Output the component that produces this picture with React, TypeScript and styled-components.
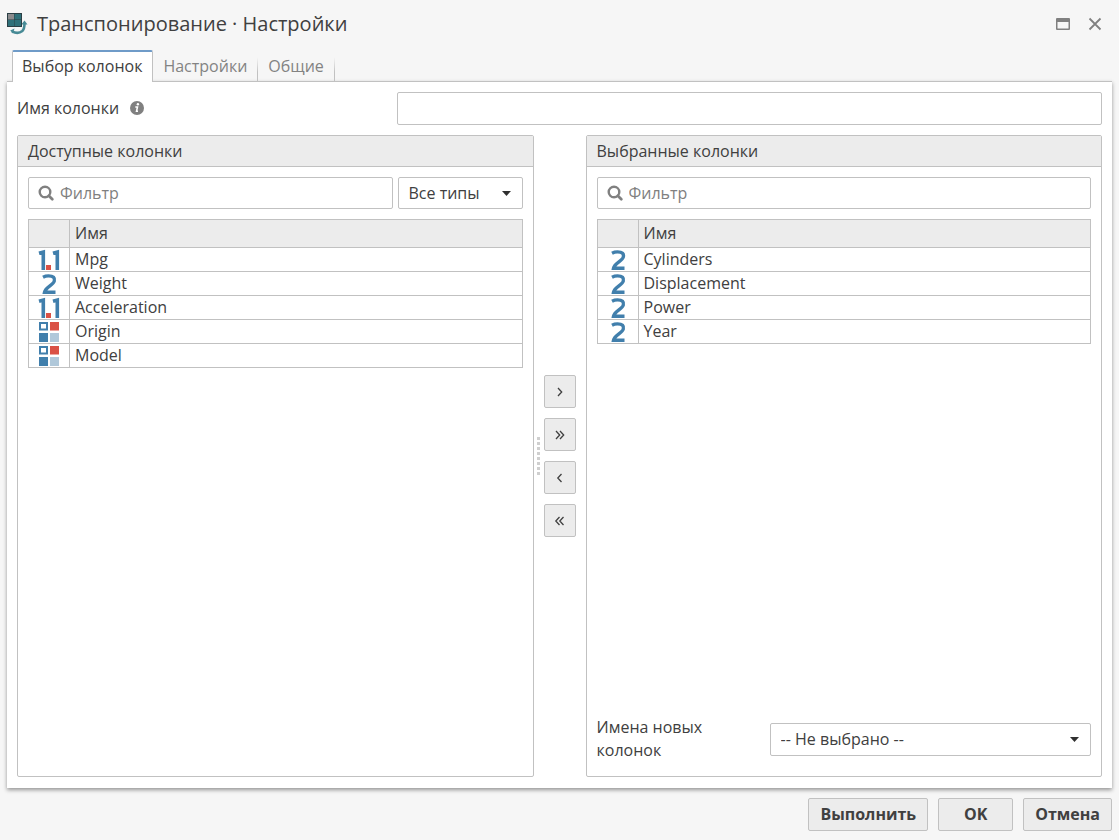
import React, { useId } from 'react';
import styled, { createGlobalStyle } from 'styled-components';

const line = '#c1c1c1';
const panelGray = '#ececec';
const textColor = '#404040';
const blue = '#417fac';
const red = '#da5145';

const GlobalStyle = createGlobalStyle`
  *, *::before, *::after { box-sizing: border-box; }
  body {
    margin: 0;
    background: #f6f6f6;
    color: ${textColor};
    font: 16px/22px "Open Sans", "Noto Sans", sans-serif;
  }
  button, input, select { font: inherit; color: inherit; }
`;

const Dialog = styled.div`
  display: flex;
  flex-direction: column;
  min-height: 100vh;
  padding: 0 7px;
`;

const TitleBar = styled.header`
  display: flex;
  align-items: center;
  height: 50px;
  padding: 0 10px 2px 0;
`;

const Title = styled.h1`
  flex: 1;
  margin: 0 0 0 9px;
  font-size: 20px;
  line-height: 28px;
  font-weight: 400;
`;

const WindowButton = styled.button`
  display: flex;
  margin-left: 17px;
  padding: 0;
  border: 0;
  background: none;
  color: #808080;
`;

const TabList = styled.div`
  display: flex;
  align-items: flex-end;
  padding-left: 5px;
`;

const Tab = styled.button<{ $active?: boolean }>`
  height: ${p => (p.$active ? 32 : 31)}px;
  margin-bottom: ${p => (p.$active ? -1 : 0)}px;
  padding: ${p => (p.$active ? '0 10px 2px 9px' : '1px 10px 0')};
  border: 0 solid ${line};
  border-width: ${p => (p.$active ? '2px 1px 0' : '0 1px 0 0')};
  border-top-color: #6f9bc8;
  border-radius: ${p => (p.$active ? '2px 2px 0 0' : '0')};
  border-image: ${p => (p.$active ? 'none' : `linear-gradient(transparent 25%, ${line} 70%) 1`)};
  background: ${p => (p.$active ? '#fff' : 'none')};
  color: ${p => (p.$active ? textColor : '#838383')};
  z-index: 1;
`;

const Content = styled.main`
  display: flex;
  flex: 1;
  flex-direction: column;
  gap: 10px;
  padding: 10px 10px 11px;
  border-top: 1px solid ${line};
  background: #fff;
  box-shadow: 0 2px 4px rgba(0, 0, 0, 0.4);
`;

const FieldRow = styled.div`
  display: flex;
  align-items: center;
`;

const FieldLabel = styled.label`
  display: flex;
  align-items: center;
  gap: 11px;
  width: 35%;
  padding-bottom: 2px;
`;

const WrappedLabel = styled.label`
  width: 35%;
  padding-right: 40px;
  line-height: 23px;
`;

const TextInput = styled.input`
  flex: 1;
  min-width: 0;
  height: 33px;
  padding: 0 10px;
  border: 1px solid ${line};
  border-radius: 2px;
  background: #fff;
`;

const Columns = styled.div`
  display: flex;
  flex: 1;
`;

const Panel = styled.section`
  display: flex;
  flex: 1 1 0;
  flex-direction: column;
  min-width: 0;
  border: 1px solid ${line};
  border-radius: 2px;
`;

const PanelTitle = styled.h2`
  margin: 0;
  padding: 4px 10px;
  border-bottom: 1px solid ${line};
  background: ${panelGray};
  font-size: 16px;
  line-height: 22px;
  font-weight: 400;
`;

const PanelBody = styled.div`
  display: flex;
  flex: 1;
  flex-direction: column;
  gap: 10px;
  padding: 10px 10px 14px;
`;

const FilterRow = styled.div`
  display: flex;
  gap: 5px;
`;

const FilterBox = styled.label`
  display: flex;
  flex: 1;
  align-items: center;
  gap: 6px;
  min-width: 0;
  height: 32px;
  padding: 0 9px;
  border: 1px solid ${line};
  border-radius: 2px;
  color: #808080;
`;

const FilterInput = styled.input`
  flex: 1;
  min-width: 0;
  padding: 0;
  border: 0;
  outline: 0;
  background: none;
  color: ${textColor};
  &::placeholder { color: #808080; opacity: 1; }
`;

const SelectBox = styled.div<{ $width?: number }>`
  position: relative;
  display: flex;
  flex: ${p => (p.$width ? `0 0 ${p.$width}px` : '1')};
`;

const Select = styled.select<{ $tall?: boolean }>`
  width: 100%;
  height: ${p => (p.$tall ? 33 : 32)}px;
  padding: 0 30px 0 10px;
  border: 1px solid ${line};
  border-radius: 2px;
  background: #fff;
  appearance: none;
`;

const Caret = styled.svg`
  position: absolute;
  top: 14px;
  right: 12px;
  pointer-events: none;
`;

const Table = styled.table`
  width: 100%;
  border-collapse: collapse;
  table-layout: fixed;
`;

const HeadCell = styled.th<{ $icon?: boolean }>`
  width: ${p => (p.$icon ? '41px' : 'auto')};
  height: 28px;
  padding: 0 5px 2px;
  border: 1px solid ${line};
  background: ${panelGray};
  font-weight: 400;
  text-align: left;
`;

const NameCell = styled.td`
  height: 24px;
  padding: 0 5px 1px;
  border: 1px solid ${line};
`;

const IconCell = styled.td`
  height: 24px;
  padding: 0;
  border: 1px solid ${line};
  line-height: 0;
  text-align: center;
`;

const Spacer = styled.div`
  flex: 1;
`;

const Transfer = styled.div`
  display: flex;
  align-items: center;
  padding-right: 10px;
`;

const Splitter = styled.div`
  display: flex;
  flex-direction: column;
  align-items: center;
  gap: 2px;
  width: 10px;
`;

const Dot = styled.span`
  width: 3px;
  height: 3px;
  background: #cfcfcf;
`;

const MoveButtons = styled.div`
  display: flex;
  flex-direction: column;
  gap: 10px;
`;

const Button = styled.button`
  height: 33px;
  padding: 0 11px 2px;
  border: 1px solid ${line};
  border-radius: 2px;
  background: ${panelGray};
`;

const MoveButton = styled(Button)`
  display: flex;
  align-items: center;
  justify-content: center;
  width: 32px;
  padding: 0;
`;

const FooterButton = styled(Button)`
  min-width: 75px;
  font-weight: 700;
`;

const Footer = styled.footer`
  display: flex;
  justify-content: flex-end;
  gap: 10px;
  padding: 10px 0 9px;
`;

type Kind = 'real' | 'integer' | 'category';

function TypeIcon({ kind }: { kind: Kind }) {
  return (
    <svg width="22" height="22" viewBox="0 0 22 22" aria-hidden="true">
      {kind === 'integer' && (
        <path
          d="M5 4.200Q7.500 2.900 10.500 2.900C15.500 2.900 17 5 16.300 8C15.500 12 7.500 14 6.500 19.200H17.500"
          fill="none"
          stroke={blue}
          strokeWidth="3.400"
        />
      )}
      {kind === 'real' && (
        <>
          <path d="M1 4.200L5.300 3V21M15 4.200L19.300 3V21" fill="none" stroke={blue} strokeWidth="3.600" />
          <rect x="8" y="16" width="5" height="5" fill={red} />
        </>
      )}
      {kind === 'category' && (
        <>
          <rect x="2" y="2" width="7" height="6.500" fill="#fff" stroke={blue} strokeWidth="2" />
          <rect x="12" y="1" width="9" height="8.500" fill={red} />
          <rect x="1" y="12" width="9" height="9" fill={blue} />
          <rect x="12" y="12" width="9" height="9" fill="#b0c8da" />
        </>
      )}
    </svg>
  );
}

function AppIcon() {
  return (
    <svg width="21" height="22" viewBox="0 0 21 22" aria-hidden="true">
      <path d="M5 18.300Q11 21.500 15.300 18Q17.500 16 17.500 10.500" fill="none" stroke="#478a95" strokeWidth="2.600" />
      <path d="M14.300 11.500L17.500 7.500L20.500 11.500ZM7.500 15.600L3.200 17.400L6 20.600Z" fill="#478a95" />
      <rect x="0" y="0" width="15" height="14" fill="#2b3f45" />
      <rect x="1" y="1" width="6" height="5.500" fill="#8b8b8d" />
      <rect x="7.500" y="1" width="6.500" height="5.500" fill="#2f7079" />
      <rect x="1" y="7" width="6" height="6" fill="#2f7079" />
      <rect x="7.500" y="7" width="6.500" height="6" fill="#2f7079" />
    </svg>
  );
}

function InfoIcon() {
  return (
    <svg width="14" height="14" viewBox="0 0 14 14" aria-hidden="true">
      <circle cx="7" cy="7" r="7" fill="#808080" />
      <circle cx="7.900" cy="3.200" r="1.200" fill="#fff" />
      <path d="M5.300 5.900H7.500L6.500 10.300H8" fill="none" stroke="#fff" strokeWidth="1.500" />
    </svg>
  );
}

function SearchIcon() {
  return (
    <svg width="16" height="16" viewBox="0 0 16 16" fill="none" stroke="#808080" aria-hidden="true">
      <circle cx="7" cy="7" r="5.300" strokeWidth="2.400" />
      <path d="M10.800 10.800L14.300 14.300" strokeWidth="2.700" strokeLinecap="round" />
    </svg>
  );
}

function Chevrons({ left, double }: { left?: boolean; double?: boolean }) {
  const arrow = left ? 'M7.500 2L3.800 6L7.500 10' : 'M4 2L7.700 6L4 10';
  return (
    <svg width="12" height="12" viewBox="0 0 12 12" fill="none" stroke="#404040" strokeWidth="1.300" aria-hidden="true">
      {double ? (
        <>
          <path d={arrow} transform="translate(-2 0)" />
          <path d={arrow} transform="translate(2 0)" />
        </>
      ) : (
        <path d={arrow} />
      )}
    </svg>
  );
}

function Filter() {
  return (
    <FilterBox>
      <SearchIcon />
      <FilterInput placeholder="Фильтр" aria-label="Фильтр" />
    </FilterBox>
  );
}

function DropDown({ id, label, value, width }: { id?: string; label?: string; value: string; width?: number }) {
  return (
    <SelectBox $width={width}>
      <Select id={id} aria-label={label} $tall={!width}>
        <option>{value}</option>
      </Select>
      <Caret width="9" height="5" viewBox="0 0 9 5" aria-hidden="true">
        <path d="M0 0H9L4.500 5Z" fill="#303030" />
      </Caret>
    </SelectBox>
  );
}

function ColumnTable({ rows }: { rows: [string, Kind][] }) {
  return (
    <Table>
      <thead>
        <tr>
          <HeadCell $icon />
          <HeadCell>Имя</HeadCell>
        </tr>
      </thead>
      <tbody>
        {rows.map(([name, kind]) => (
          <tr key={name}>
            <IconCell><TypeIcon kind={kind} /></IconCell>
            <NameCell>{name}</NameCell>
          </tr>
        ))}
      </tbody>
    </Table>
  );
}

const available: [string, Kind][] = [
  ['Mpg', 'real'],
  ['Weight', 'integer'],
  ['Acceleration', 'real'],
  ['Origin', 'category'],
  ['Model', 'category'],
];

const selected: [string, Kind][] = [
  ['Cylinders', 'integer'],
  ['Displacement', 'integer'],
  ['Power', 'integer'],
  ['Year', 'integer'],
];

export default function App() {
  const nameId = useId();
  const newNamesId = useId();
  return (
    <Dialog>
      <GlobalStyle />
      <TitleBar>
        <AppIcon />
        <Title>Транспонирование · Настройки</Title>
        <WindowButton aria-label="Развернуть">
          <svg width="16" height="14" viewBox="0 0 16 14" aria-hidden="true">
            <path d="M2 1H14Q15 1 15 2V12Q15 13 14 13H2Q1 13 1 12V2Q1 1 2 1ZM2.500 5V11.500H13.500V5Z" fill="currentColor" fillRule="evenodd" />
          </svg>
        </WindowButton>
        <WindowButton aria-label="Закрыть">
          <svg width="14" height="14" viewBox="0 0 14 14" fill="none" stroke="currentColor" strokeWidth="1.800" aria-hidden="true">
            <path d="M1.500 1.500L12.500 12.500M12.500 1.500L1.500 12.500" />
          </svg>
        </WindowButton>
      </TitleBar>

      <TabList role="tablist">
        <Tab role="tab" aria-selected="true" $active>Выбор колонок</Tab>
        <Tab role="tab" aria-selected="false">Настройки</Tab>
        <Tab role="tab" aria-selected="false">Общие</Tab>
      </TabList>

      <Content>
        <FieldRow>
          <FieldLabel htmlFor={nameId}>
            Имя колонки
            <InfoIcon />
          </FieldLabel>
          <TextInput id={nameId} />
        </FieldRow>

        <Columns>
          <Panel>
            <PanelTitle>Доступные колонки</PanelTitle>
            <PanelBody>
              <FilterRow>
                <Filter />
                <DropDown label="Тип" value="Все типы" width={125} />
              </FilterRow>
              <ColumnTable rows={available} />
            </PanelBody>
          </Panel>

          <Transfer>
            <Splitter>
              {Array.from({ length: 8 }, (_, i) => <Dot key={i} />)}
            </Splitter>
            <MoveButtons>
              <MoveButton aria-label="Добавить"><Chevrons /></MoveButton>
              <MoveButton aria-label="Добавить все"><Chevrons double /></MoveButton>
              <MoveButton aria-label="Убрать"><Chevrons left /></MoveButton>
              <MoveButton aria-label="Убрать все"><Chevrons left double /></MoveButton>
            </MoveButtons>
          </Transfer>

          <Panel>
            <PanelTitle>Выбранные колонки</PanelTitle>
            <PanelBody>
              <FilterRow>
                <Filter />
              </FilterRow>
              <ColumnTable rows={selected} />
              <Spacer />
              <FieldRow>
                <WrappedLabel htmlFor={newNamesId}>Имена новых колонок</WrappedLabel>
                <DropDown id={newNamesId} value="-- Не выбрано --" />
              </FieldRow>
            </PanelBody>
          </Panel>
        </Columns>
      </Content>

      <Footer>
        <FooterButton>Выполнить</FooterButton>
        <FooterButton>OK</FooterButton>
        <FooterButton>Отмена</FooterButton>
      </Footer>
    </Dialog>
  );
}
